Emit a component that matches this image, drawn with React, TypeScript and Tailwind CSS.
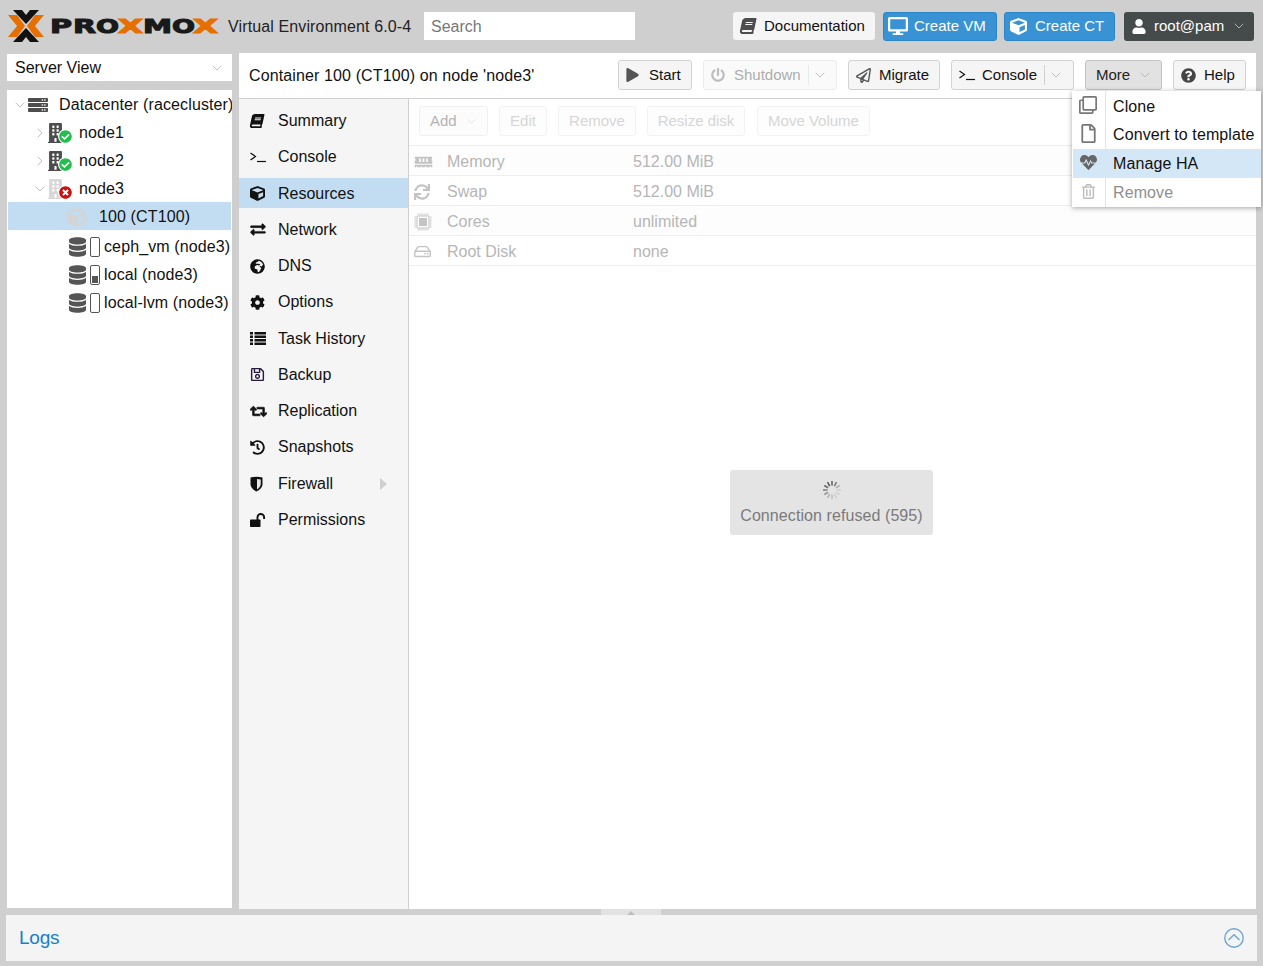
import React from 'react';
import { ChevronDown, ChevronRight } from 'lucide-react';
import {
  FaBook, FaBuilding, FaCheckCircle, FaCog, FaCube, FaDatabase, FaDesktop, FaExchangeAlt, FaGlobeAfrica,
  FaHeartbeat, FaHistory, FaMemory, FaPlay, FaPowerOff, FaQuestionCircle, FaRegClone,
  FaRegFile, FaRegHdd, FaRegPaperPlane, FaRegSave, FaRegTrashAlt, FaRetweet, FaServer, FaSync,
  FaTimesCircle, FaUser,
} from 'react-icons/fa';

const Logo: React.FC = () => (
  <svg viewBox="8 8 212 36" className="w-[212px] h-[36px] shrink-0">
    <polygon points="8,15 17,15 25,26 17,37 8,37 17,26" fill="#e57000" />
    <polygon points="44,15 35,15 27,26 35,37 44,37 35,26" fill="#e57000" />
    <polygon points="13,10 22,10 26,15 30,10 39,10 26,24" fill="#111" />
    <polygon points="13,42 22,42 26,37 30,42 39,42 26,28" fill="#111" />
    <g fontFamily="'DejaVu Sans', sans-serif" fontWeight="700" fontSize="20" strokeWidth="1.1">
      <text x="50" y="33" textLength="22" lengthAdjust="spacingAndGlyphs" fill="#1a1a1a" stroke="#1a1a1a">P</text>
      <text x="73" y="33" textLength="23" lengthAdjust="spacingAndGlyphs" fill="#1a1a1a" stroke="#1a1a1a">R</text>
      <text x="96" y="33" textLength="23" lengthAdjust="spacingAndGlyphs" fill="#1a1a1a" stroke="#1a1a1a">O</text>
      <text x="118" y="33" textLength="25" lengthAdjust="spacingAndGlyphs" fill="#e57000" stroke="#e57000">X</text>
      <text x="143" y="33" textLength="29" lengthAdjust="spacingAndGlyphs" fill="#1a1a1a" stroke="#1a1a1a">M</text>
      <text x="172" y="33" textLength="23" lengthAdjust="spacingAndGlyphs" fill="#1a1a1a" stroke="#1a1a1a">O</text>
      <text x="193" y="33" textLength="25" lengthAdjust="spacingAndGlyphs" fill="#e57000" stroke="#e57000">X</text>
    </g>
  </svg>
);

const Spinner: React.FC = () => (
  <svg viewBox="0 0 20 20" className="w-[20px] h-[20px]">
    {[0, 30, 60, 90, 120, 150, 180, 210, 240, 270, 300, 330].map((a, i) => (
      <line
        key={a}
        x1="10"
        y1="1"
        x2="10"
        y2="5.5"
        stroke="#555"
        strokeWidth="1.6"
        strokeOpacity={[0.9, 0.75, 0.35, 0.15, 0.12, 0.15, 0.25, 0.35, 0.55, 0.7, 0.85, 1][i]}
        transform={`rotate(${a} 10 10)`}
      />
    ))}
  </svg>
);

const TerminalIcon: React.FC = () => (
  <svg viewBox="0 0 16 12" className="w-[16px] h-[12px]" fill="none" stroke="currentColor" strokeWidth="1.2">
    <path d="M0.5 2 L5.5 5.5 L0.5 9" />
    <path d="M7 10.5 H16" />
  </svg>
);

const BookIcon: React.FC<{ className: string }> = ({ className }) => <FaBook className={`-skew-x-12 ${className}`} />;

const ListIcon: React.FC = () => (
  <svg viewBox="0 0 16 13" className="w-[16px] h-[13px]" fill="currentColor">
    <path d="M0 0h3v2.4H0zM4.5 0H16v2.4H4.5zM0 3.5h3v2.4H0zM4.5 3.5H16v2.4H4.5zM0 7h3v2.4H0zM4.5 7H16v2.4H4.5zM0 10.5h3v2.4H0zM4.5 10.5H16v2.4H4.5z" />
  </svg>
);

const ShieldIcon: React.FC = () => (
  <svg viewBox="0 0 13 16" className="w-[13px] h-[16px]">
    <path d="M0.5 1.5 Q6.5 0 12.5 1.5 V8 C12.5 12 8.5 14.5 6.5 15.5 C4.5 14.5 0.5 12 0.5 8 Z" fill="#111" />
    <path d="M7 3 Q9 3 10.7 3.4 V8 C10.7 10.5 8.6 12.4 7 13.4 Z" fill="#e8e8e8" />
  </svg>
);

const UnlockIcon: React.FC = () => (
  <svg viewBox="0 0 16 14" className="w-[16px] h-[14px]">
    <rect x="0" y="6.5" width="10.5" height="7.5" rx="0.8" fill="#111" />
    <path d="M7.5 7 V4.3 a3.2 3.2 0 0 1 6.6 0 V6" fill="none" stroke="#111" strokeWidth="1.9" />
  </svg>
);

const ChipIcon: React.FC = () => (
  <svg viewBox="0 0 18 18" className="w-[18px] h-[18px]" fill="currentColor">
    <rect x="3" y="3" width="12" height="12" rx="1" fill="none" stroke="currentColor" />
    <rect x="5" y="5" width="8" height="8" />
    <path d="M4 0.5v2M6 0.5v2M8 0.5v2M10 0.5v2M12 0.5v2M14 0.5v2M4 15.5v2M6 15.5v2M8 15.5v2M10 15.5v2M12 15.5v2M14 15.5v2M0.5 4h2M0.5 6h2M0.5 8h2M0.5 10h2M0.5 12h2M0.5 14h2M15.5 4h2M15.5 6h2M15.5 8h2M15.5 10h2M15.5 12h2M15.5 14h2" stroke="currentColor" strokeWidth="0.9" fill="none" />
  </svg>
);

const ToolButton: React.FC<{
  icon?: React.ReactNode;
  label: string;
  width: string;
  split?: boolean;
  arrow?: boolean;
  disabled?: boolean;
  active?: boolean;
}> = ({ icon, label, width, split, arrow, disabled, active }) => (
  <div
    className={`${width} h-[30px] flex items-center rounded-[3px] border text-[15px] pl-[7px] whitespace-nowrap ${
      disabled
        ? 'border-[#ebebeb] bg-[#fafafa] text-[#adadad]'
        : active
          ? 'border-[#c4c4c4] bg-[#e2e2e2] text-[#222] pl-[10px]'
          : 'border-[#d2d2d2] bg-[#f5f5f5] text-[#111]'
    }`}
  >
    {icon && <span className="w-[23px] flex items-center shrink-0">{icon}</span>}
    <span>{label}</span>
    {split && <span className={`ml-[7px] h-[20px] border-l ${disabled ? 'border-[#eaeaea]' : 'border-[#d0d0d0]'}`} />}
    {(split || arrow) && (
      <ChevronDown className={`${split ? 'ml-[3px]' : 'ml-[7px]'} w-[16px] h-[16px] text-[#b0b0b0]`} strokeWidth={1.2} />
    )}
  </div>
);

const navItems: [React.ReactNode, string][] = [
  [<BookIcon className="w-[14px] h-[14px]" />, 'Summary'],
  [<TerminalIcon />, 'Console'],
  [<FaCube className="w-[15px] h-[15px]" />, 'Resources'],
  [<FaExchangeAlt className="w-[16px] h-[15px] [stroke-width:16px]" />, 'Network'],
  [<FaGlobeAfrica className="w-[15px] h-[15px]" />, 'DNS'],
  [<FaCog className="w-[15px] h-[15px]" />, 'Options'],
  [<ListIcon />, 'Task History'],
  [<FaRegSave className="w-[15px] h-[15px] text-[#2b1a40]" />, 'Backup'],
  [<FaRetweet className="w-[17px] h-[15px] [stroke-width:24px]" />, 'Replication'],
  [<FaHistory className="w-[15px] h-[15px]" />, 'Snapshots'],
  [<ShieldIcon />, 'Firewall'],
  [<UnlockIcon />, 'Permissions'],
];

const NodeIcon: React.FC<{ ok: boolean }> = ({ ok }) => (
  <span className="relative block w-[26px] h-[22px] shrink-0">
    <FaBuilding preserveAspectRatio="none" className={`absolute left-0 top-px w-[15px] h-[20px] ${ok ? 'text-[#4d4d4d]' : 'text-[#d8d8d8]'}`} />
    <span className="absolute left-[10px] top-[7px] w-[15px] h-[15px] rounded-full bg-white flex items-center justify-center">
      {ok ? (
        <FaCheckCircle className="w-[13px] h-[13px] text-[#21bf4b]" />
      ) : (
        <FaTimesCircle className="w-[13px] h-[13px] text-[#cc1111]" />
      )}
    </span>
  </span>
);

const TreeNode: React.FC<{ label: string; ok: boolean; open?: boolean }> = ({ label, ok, open }) => (
  <div className="h-[28px] flex items-center pl-[24px] pt-[2px]">
    {open ? (
      <ChevronDown className="w-[16px] h-[16px] text-[#b0b0b0] shrink-0" strokeWidth={1.2} />
    ) : (
      <ChevronRight className="w-[16px] h-[16px] text-[#b0b0b0] shrink-0" strokeWidth={1.2} />
    )}
    <NodeIcon ok={ok} />
    <span className="ml-[5px]">{label}</span>
  </div>
);

const StorageRow: React.FC<{ label: string; fill?: boolean }> = ({ label, fill }) => (
  <div className="h-[28px] flex items-center pl-[61px] pt-[2px] whitespace-nowrap">
    <FaDatabase className="w-[17px] h-[20px] text-[#555] shrink-0" />
    <span className="ml-[4px] w-[10px] h-[20px] border border-[#555] rounded-[2px] shrink-0 flex items-end p-[1px]">
      {fill && <span className="w-full h-[7px] bg-[#555]" />}
    </span>
    <span className="ml-[4px]">{label}</span>
  </div>
);

const resourceRows: [React.ReactNode, string, string][] = [
  [<FaMemory className="w-[19px] h-[14px]" />, 'Memory', '512.00 MiB'],
  [<FaSync className="w-[16px] h-[16px]" />, 'Swap', '512.00 MiB'],
  [<ChipIcon />, 'Cores', 'unlimited'],
  [<FaRegHdd className="w-[17px] h-[15px]" />, 'Root Disk', 'none'],
];

const menuItems: [React.ReactNode, string, string][] = [
  [<FaRegClone className="w-[18px] h-[18px] text-[#777]" />, 'Clone', 'text-[#111]'],
  [<FaRegFile className="w-[15px] h-[19px] text-[#777]" />, 'Convert to template', 'text-[#111]'],
  [<FaHeartbeat className="w-[19px] h-[17px] text-[#666]" />, 'Manage HA', 'text-[#111] bg-[#d4e7f6]'],
  [<FaRegTrashAlt className="w-[13px] h-[15px] text-[#bbb]" />, 'Remove', 'text-[#8f8f8f]'],
];

const App: React.FC = () => {
  return (
    <div className="relative h-[966px] w-[1263px] overflow-hidden bg-[#cfcfcf] text-[16px] text-[#111] font-['Liberation_Sans',sans-serif]">
      {/* top bar */}
      <div className="h-[53px] flex items-center pl-[8px] pr-[9px] pb-[1px]">
        <Logo />
        <span className="ml-[8px] w-[183px] shrink-0 pt-[2px] text-[#222] tracking-[0.12px] whitespace-nowrap">Virtual Environment 6.0-4</span>
        <div className="ml-[13px] w-[211px] h-[28px] bg-white flex items-center pl-[7px] pt-[2px] text-[#777]">Search</div>
        <div className="ml-auto flex items-center whitespace-nowrap">
          <div className="w-[142px] h-[28px] rounded-[3px] bg-[#f5f5f5] flex items-center pl-[7px] text-[15px]">
            <BookIcon className="w-[16px] h-[16px] text-[#4d4d4d]" />
            <span className="ml-[8px]">Documentation</span>
          </div>
          <div className="ml-[8px] w-[114px] h-[29px] rounded-[3px] bg-[#3892d4] border border-[#2a86ca] flex items-center pl-[4px] text-[15px] text-white">
            <FaDesktop className="w-[20px] h-[18px]" />
            <span className="ml-[6px]">Create VM</span>
          </div>
          <div className="ml-[7px] w-[111px] h-[29px] rounded-[3px] bg-[#3892d4] border border-[#2a86ca] flex items-center pl-[5px] text-[15px] text-white">
            <FaCube className="w-[17px] h-[17px]" />
            <span className="ml-[8px]">Create CT</span>
          </div>
          <div className="ml-[9px] w-[130px] h-[29px] rounded-[3px] bg-[#454b4b] flex items-center pl-[8px] text-[15px] text-white">
            <FaUser className="w-[14px] h-[15px]" />
            <span className="ml-[8px]">root@pam</span>
            <ChevronDown className="ml-[7px] w-[16px] h-[16px] text-[#b0b0b0]" strokeWidth={1.5} />
          </div>
        </div>
      </div>

      {/* main */}
      <div className="h-[856px] flex pl-[7px] pr-[7px]">
        <div className="w-[225px] shrink-0 flex flex-col pt-[1px]">
          <div className="h-[27px] bg-white flex items-center pl-[8px] pr-[7px] justify-between">
            <span>Server View</span>
            <ChevronDown className="w-[16px] h-[16px] text-[#b0b0b0]" strokeWidth={1.2} />
          </div>
          <div className="mt-[9px] h-[818px] bg-white overflow-hidden pl-[1px] pr-[1px] whitespace-nowrap tracking-[0.12px]">
            <div className="h-[28px] flex items-center pl-[4px] pt-[2px]">
              <ChevronDown className="w-[16px] h-[16px] text-[#b0b0b0] shrink-0" strokeWidth={1.2} />
              <FaServer preserveAspectRatio="none" className="w-[20px] h-[16px] text-[#4d4d4d] shrink-0" />
              <span className="ml-[11px]">Datacenter (racecluster)</span>
            </div>
            <TreeNode label="node1" ok />
            <TreeNode label="node2" ok />
            <TreeNode label="node3" ok={false} open />
            <div className="h-[28px] flex items-center pl-[59px] pt-[2px] bg-[#c2ddf2]">
              <FaCube className="w-[19px] h-[19px] text-[#d4d4d4]" />
              <span className="ml-[13px]">100 (CT100)</span>
            </div>
            <div className="mt-[2px]">
              <StorageRow label="ceph_vm (node3)" />
              <StorageRow label="local (node3)" fill />
              <StorageRow label="local-lvm (node3)" />
            </div>
          </div>
        </div>

        <div className="ml-[7px] flex-1 flex flex-col bg-white min-w-0">
          <div className="h-[46px] shrink-0 border-b border-[#cfcfcf] flex items-center pl-[10px] pb-[1px]">
            <span className="pt-[2px] tracking-[0.12px]">Container 100 (CT100) on node 'node3'</span>
            <div className="ml-auto mr-[10px] flex items-center gap-[11px]">
              <ToolButton icon={<FaPlay className="w-[13px] h-[14px] text-[#555]" />} label="Start" width="w-[74px]" />
              <ToolButton icon={<FaPowerOff className="w-[14px] h-[14px] text-[#bdbdbd]" />} label="Shutdown" width="w-[134px]" split disabled />
              <ToolButton icon={<FaRegPaperPlane className="w-[15px] h-[15px] text-[#555]" />} label="Migrate" width="w-[92px]" />
              <ToolButton icon={<TerminalIcon />} label="Console" width="w-[123px]" split />
              <ToolButton label="More" width="w-[77px]" arrow active />
              <ToolButton icon={<FaQuestionCircle className="w-[15px] h-[15px] text-[#444]" />} label="Help" width="w-[73px]" />
            </div>
          </div>

          <div className="flex-1 flex min-h-0">
            <div className="w-[170px] shrink-0 bg-[#f5f5f5] border-r border-[#cfcfcf] pt-[6.02px] flex flex-col gap-[6.27px]">
              {navItems.map(([icon, label]) => (
                <div key={label} className={`h-[30px] flex items-center pt-[2px] ${label === 'Resources' ? 'bg-[#c2ddf2]' : ''}`}>
                  <span className="w-[39px] pl-[11px] flex items-center text-[#111]">{icon}</span>
                  <span>{label}</span>
                  {label === 'Firewall' && (
                    <span className="ml-auto mr-[21px] border-y-[6px] border-y-transparent border-l-[7px] border-l-[#cfcfcf]" />
                  )}
                </div>
              ))}
            </div>

            <div className="relative flex-1 min-w-0">
              <div className="h-[47px] border-b border-[#eeeeee] flex items-center pl-[10px] gap-[11px] text-[15px] pb-[2px]">
                <div className="w-[69px] h-[30px] border border-[#f0f0f0] bg-[#fcfcfc] rounded-[3px] flex items-center pl-[10px] text-[#b4b4b4]">
                  Add
                  <ChevronDown className="ml-[7px] w-[15px] h-[15px] text-[#dcdcdc]" strokeWidth={1.2} />
                </div>
                {[
                  ['Edit', 'w-[48px]'],
                  ['Remove', 'w-[78px]'],
                  ['Resize disk', 'w-[98px]'],
                  ['Move Volume', 'w-[113px] ml-px'],
                ].map(([label, w]) => (
                  <div key={label} className={`${w} h-[30px] border border-[#f2f2f2] bg-[#fdfdfd] rounded-[3px] flex items-center justify-center text-[#d6d6d6]`}>
                    {label}
                  </div>
                ))}
              </div>
              {resourceRows.map(([icon, name, value], i) => (
                <div key={name} className={`h-[30px] border-b border-[#eeeeee] flex items-center pt-[2px] text-[#b6b6b6] ${i % 2 ? 'bg-white' : 'bg-[#fdfdfd]'}`}>
                  <span className="w-[38px] pl-[5px] flex items-center text-[#c4c4c4]">{icon}</span>
                  <span className="w-[186px]">{name}</span>
                  <span>{value}</span>
                </div>
              ))}

              {/* load mask message */}
              <div className="absolute left-[321px] top-[371px] w-[203px] h-[65px] bg-[#e4e4e4] rounded-[3px] flex flex-col items-center pt-[10px] text-[#7a7a7a] tracking-[0.08px]">
                <Spinner />
                <span className="mt-[4px]">Connection refused (595)</span>
              </div>
            </div>
          </div>
        </div>
      </div>

      {/* splitter handle */}
      <div className="h-[6px] flex justify-center pr-px">
        <div className="w-[60px] h-[6px] bg-[#e2e2e2] flex justify-center pt-[2px]">
          <span className="border-x-[4px] border-x-transparent border-b-[4px] border-b-[#bdbdbd]" />
        </div>
      </div>

      {/* logs */}
      <div className="ml-[6px] mr-[6px] h-[46px] bg-[#f4f4f4] flex items-center pl-[13px] pr-[13px] justify-between">
        <span className="text-[19px] tracking-[-0.2px] text-[#157fcc]">Logs</span>
        <svg viewBox="0 0 20 20" className="w-[20px] h-[20px]" fill="none" stroke="#6ea6d2">
          <circle cx="10" cy="10" r="9.2" strokeWidth="1.4" />
          <path d="M4.5 12 L10 6.8 L15.5 12" strokeWidth="1.4" />
        </svg>
      </div>

      {/* More menu */}
      <div className="absolute left-[1072px] top-[91px] w-[189px] bg-white shadow-[0_1px_5px_rgba(0,0,0,0.35)] pt-px pl-px tracking-[0.1px]">
        <div className="absolute left-[33px] top-0 bottom-0 border-l border-[#e4e4e4]" />
        {menuItems.map(([icon, label, cls], i) => (
          <div key={label} className={`relative h-[29px] flex items-center ${i === 1 ? '-mt-px' : ''} ${cls}`}>
            <span className="w-[30px] flex justify-center -mt-[3px] shrink-0">{icon}</span>
            <span className="ml-[10px]">{label}</span>
          </div>
        ))}
      </div>
    </div>
  );
};

export default App;
